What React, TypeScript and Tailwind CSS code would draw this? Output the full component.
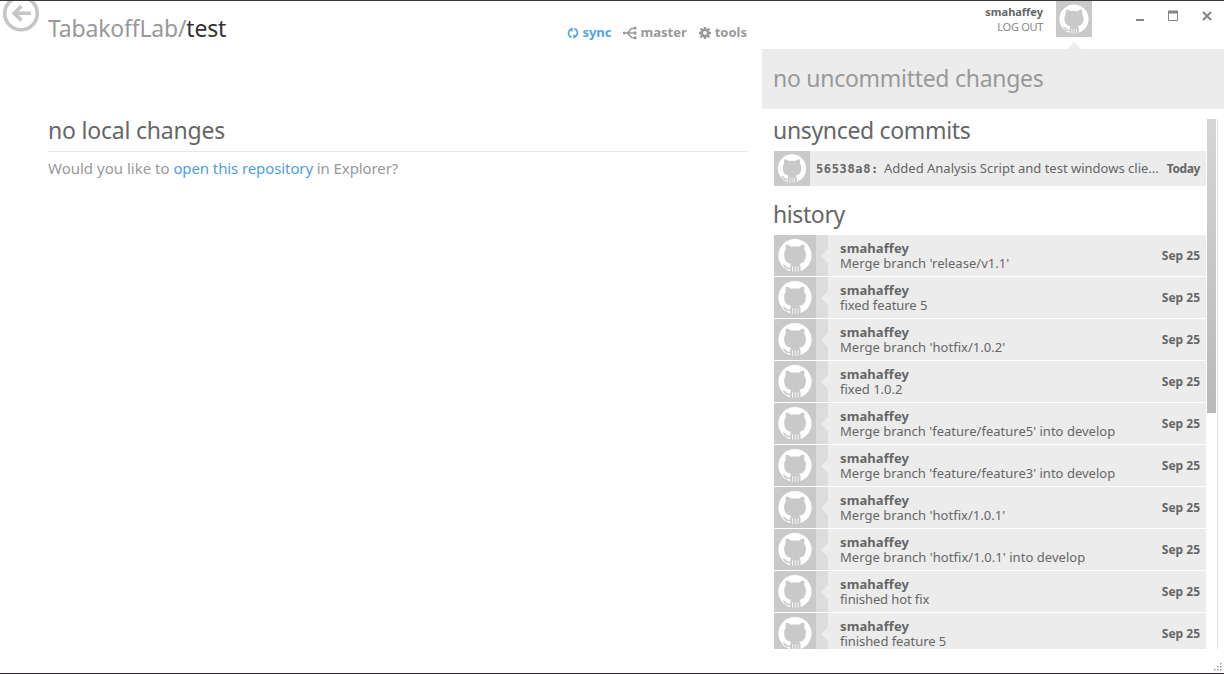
import React from "react";

const history: [string, string][] = [
  ["Merge branch 'release/v1.1'", "tracking-[0.03px]"],
  ["fixed feature 5", "tracking-[-0.06px]"],
  ["Merge branch 'hotfix/1.0.2'", "tracking-[0.03px]"],
  ["fixed 1.0.2", "tracking-[0px]"],
  ["Merge branch 'feature/feature5' into develop", "tracking-[0.01px]"],
  ["Merge branch 'feature/feature3' into develop", "tracking-[0.01px]"],
  ["Merge branch 'hotfix/1.0.1'", "tracking-[0.03px]"],
  ["Merge branch 'hotfix/1.0.1' into develop", "tracking-[0.05px]"],
  ["finished hot fix", "tracking-[-0.1px]"],
  ["finished feature 5", "tracking-[-0.06px]"],
];

function Octocat({ className }: { className: string }) {
  return (
    <svg viewBox="0 0 42 42" className={"block shrink-0 bg-[#c9c9c9] " + className}>
      <circle cx="21" cy="21" r="17" fill="#fff" />
      <path
        fill="#c9c9c9"
        d="M12 9.800c1.900 0 3.800 1.200 5.200 2.300 2.500-.5 5.100-.5 7.600 0 1.400-1.100 3.300-2.300 5.200-2.300.8 1.700.9 3.500.4 5.300 1.400 1.600 1.900 3.300 1.800 5.700-.2 5.700-2.500 8-6.900 8.700.9.900 1.400 2 1.400 3.300V38H16v-3.200c-4.600.8-5.500-1.500-6.600-3-.5-.7-1.200-1.100-1.900-1.500 2.800-.7 4 1.200 5 2.300 1 1 2.200 1 3.500.6.1-1.600.4-2.900 1-3.700-4.600-.7-6.900-3-7.100-8.700-.1-2.200.3-4.100 1.700-5.700-.5-1.800-.4-3.600.4-5.300z"
      />
      <path stroke="#fff" strokeWidth="0.8" d="M18.500 32v5.700M21.300 32v5.700M24.100 32v5.700" />
    </svg>
  );
}

export default function App() {
  return (
    <div className="flex h-[674px] w-[1224px] flex-col overflow-hidden border-t border-b border-t-[#3a383b] border-b-[#2d2b2e] bg-white font-['Noto_Sans','Open_Sans',sans-serif] text-[#666]">
      <div className="flex min-h-0 flex-1">
        <main className="flex w-[762px] flex-col">
          <header className="flex h-[110px] items-start">
            <svg viewBox="0 0 42 32" className="h-8 w-[42px] shrink-0" fill="none" stroke="#c6c6c6">
              <circle cx="21" cy="12.500" r="16.300" strokeWidth="3.600" />
              <path d="M31 12.200H14M21.500 5l-7.300 7.200 7.300 7.200" strokeWidth="3.600" />
            </svg>
            <h1 className="mt-[11px] ml-1.5 flex text-[23px] leading-8 tracking-[-0.19px] text-[#999]">
              <span>TabakoffLab/</span>
              <span className="text-[#333]">test</span>
            </h1>
            <nav className="mt-[22px] mr-[15px] ml-auto flex h-5 items-center text-[13px] font-bold text-[#999]">
              <a className="flex items-center gap-[3px] text-[#4ea4e6]">
                <svg viewBox="0 0 12 14" className="h-3.5 w-3" fill="none" stroke="currentColor" strokeWidth="1.700">
                  <path d="M4.600 11.400A4.300 4.300 0 0 1 2.700 4.300M7.400 2.600A4.300 4.300 0 0 1 9.300 9.700" />
                  <path d="M5.600 1.200v4.600L1.300 4zM6.400 12.800V8.200l4.300 1.800z" fill="currentColor" stroke="none" />
                </svg>
                <span>sync</span>
              </a>
              <a className="ml-[11px] flex items-center gap-1">
                <svg viewBox="0 0 14 14" className="size-3.5" fill="none" stroke="currentColor" strokeWidth="1.600">
                  <path d="M1 7h11M12 2.200H9.800Q8.800 2.200 7.800 3.300L4.500 7l3.300 3.700Q8.800 11.800 9.800 11.800H12" />
                  <path d="M11 .8h2.500v2.800H11zM11 5.600h2.500v2.800H11zM11 10.400h2.500v2.800H11zM0 5.800h2.500v2.400H0z" fill="currentColor" stroke="none" />
                </svg>
                <span>master</span>
              </a>
              <a className="ml-3 flex items-center gap-1">
                <svg viewBox="0 0 12 12" className="size-3" fill="none" stroke="currentColor">
                  <circle cx="6" cy="6" r="3.200" strokeWidth="2.600" />
                  <path d="M6 0v2M6 10v2M0 6h2M10 6h2M1.500 1.500l1.500 1.500M9 9l1.500 1.500M10.500 1.500 9 3M3 9l-1.500 1.500" strokeWidth="2.400" />
                </svg>
                <span>tools</span>
              </a>
            </nav>
          </header>
          <section className="mr-[15px] ml-12">
            <h2 className="h-[41px] border-b border-[#e8e8e8] pt-[3px] text-[23px] leading-8 tracking-[-0.2px]">no local changes</h2>
            <p className="mt-1 text-[15px] leading-6 text-[#999]">
              Would you like to <a className="tracking-[-0.1px] text-[#4ea0dc]">open this repository</a>
              <span className="tracking-[-0.1px]"> in Explorer?</span>
            </p>
          </section>
        </main>

        <aside className="flex w-[462px] flex-col">
          <header className="flex h-12 shrink-0 items-start">
            <div className="mt-1 ml-auto text-right text-[11px]">
              <div className="leading-[14px] font-bold">smahaffey</div>
              <div className="leading-[15px] tracking-[-0.3px] text-[#888]">LOG OUT</div>
            </div>
            <div className="ml-[13px] flex flex-col items-center">
              <Octocat className="size-9" />
              <svg viewBox="0 0 14 7" className="mt-[5px] h-[7px] w-3.5">
                <path d="M0 7 7 0l7 7z" fill="#ececec" />
              </svg>
            </div>
            <svg viewBox="0 0 132 36" className="h-9 w-[132px]" fill="none" stroke="#858585">
              <path d="M44 19h8" strokeWidth="2" />
              <path d="M76.500 10v9.500h9V10" />
              <path d="M76 11h10" strokeWidth="3" />
              <path d="m111 11 8 8m0-8-8 8" strokeWidth="2" />
            </svg>
          </header>
          <div className="flex h-[60px] shrink-0 items-center bg-[#ececec] pb-0.5 pl-[11px] text-[23px] tracking-[-0.28px] text-[#999]">no uncommitted changes</div>
          <div className="flex h-[540px] shrink-0 overflow-hidden pt-2.5 pl-3">
            <div className="w-[432px]">
              <h2 className="-ml-px h-8 text-[23px] leading-[22px] tracking-[-0.33px]">unsynced commits</h2>
              <div className="flex h-[35px] items-center bg-[#ececec] text-[13px]">
                <Octocat className="h-[35px] w-9" />
                <b className="ml-1.5 w-[68px] font-['DejaVu_Sans_Mono',monospace] text-[12px] tracking-[0.65px]">56538a8:</b>
                <span>Added Analysis Script and test windows clie...</span>
                <b className="mr-1.5 ml-auto text-[12px] tracking-[-0.4px]">Today</b>
              </div>
              <h2 className="-ml-px h-[49px] pt-3 text-[23px] leading-8 tracking-[-0.4px]">history</h2>
              {history.map(([message, tracking], i) => (
                <div key={i} className="mb-px flex h-[41px] bg-[#ececec] text-[13px]">
                  <Octocat className="h-[41px] w-[42px]" />
                  <svg viewBox="0 0 12 41" className="h-[41px] w-3 shrink-0">
                    <path d="M0 0h12v14l-7 7 7 7v13H0z" fill="#dcdcdc" />
                  </svg>
                  <div className="ml-3 pt-[6px] leading-[15px]">
                    <div className="font-bold tracking-[0.1px]">smahaffey</div>
                    <div className={tracking}>{message}</div>
                  </div>
                  <b className="mr-1.5 ml-auto text-[12px] leading-[41px]">Sep 25</b>
                </div>
              ))}
            </div>
            <div className="ml-px h-[294px] w-[9px] bg-linear-to-b from-[#d5d5d5] to-[#b9b9b9]" />
            <div className="ml-px h-full w-px bg-[#e2e2e2]" />
          </div>
          <svg viewBox="0 0 10 10" className="mt-auto mr-px mb-px ml-auto size-2.5" fill="#999">
            <path d="M7 1h1.500v1.500H7zM4 4h1.500v1.500H4zM7 4h1.500v1.500H7zM1 7h1.500v1.500H1zM4 7h1.500v1.500H4zM7 7h1.500v1.500H7z" />
          </svg>
        </aside>
      </div>
    </div>
  );
}
